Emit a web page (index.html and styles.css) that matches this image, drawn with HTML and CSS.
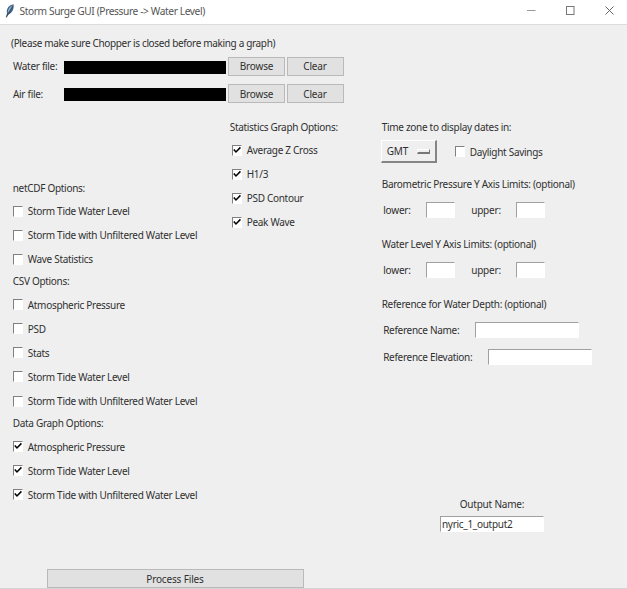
FILE: index.html
```html
<!DOCTYPE html>
<html lang="en">
<head>
<meta charset="utf-8">
<title>Storm Surge GUI (Pressure -&gt; Water Level)</title>
<link rel="stylesheet" href="styles.css">
</head>
<body>
<div class="window">
  <header class="titlebar">
    <svg class="feather" width="10" height="14" viewBox="0 0 10 14"><path d="M1 13 2 9C1 5 4 1 8.500 .3 9.300 4 7.500 9 3.500 10.500L1.500 13.500Z" fill="#3f5f80"/><path d="M2.800 9C2.500 5.500 5 2.500 7.500 1.300 7 4 5 7 2.800 9Z" fill="#8fb2d6"/><path d="M1.200 13.500 7.500 2" stroke="#2c3d50" stroke-width=".6"/></svg>
    <h1 class="title">Storm Surge GUI (Pressure -&gt; Water Level)</h1>
    <svg class="controls" width="90" height="12" viewBox="0 0 90 12" fill="none"><path d="M0 5.500H8.500" stroke="#999"/><rect x="39.500" y="1.500" width="7.500" height="8" stroke="#777"/><path d="M78.500 1.500 86.500 9.500M86.500 1.500 78.500 9.500" stroke="#666"/></svg>
  </header>
  <main class="content">
    <p class="note">(Please make sure Chopper is closed before making a graph)</p>
    <div class="file-row"><span class="file-label">Water file:</span><span class="path"></span><button>Browse</button><button>Clear</button></div>
    <div class="file-row"><span class="file-label">Air file:</span><span class="path"></span><button>Browse</button><button>Clear</button></div>
    <div class="columns">
      <section class="outputs">
        <h2>netCDF Options:</h2>
        <label class="check"><i class="box"></i>Storm Tide Water Level</label>
        <label class="check"><i class="box"></i>Storm Tide with Unfiltered Water Level</label>
        <label class="check"><i class="box"></i>Wave Statistics</label>
        <h2>CSV Options:</h2>
        <label class="check"><i class="box"></i>Atmospheric Pressure</label>
        <label class="check"><i class="box"></i>PSD</label>
        <label class="check"><i class="box"></i>Stats</label>
        <label class="check"><i class="box"></i>Storm Tide Water Level</label>
        <label class="check"><i class="box"></i>Storm Tide with Unfiltered Water Level</label>
        <h2>Data Graph Options:</h2>
        <label class="check"><i class="box"><svg viewBox="0 0 7 7"><path d="M.7 3 2.600 5.200 6.500 1.200"/></svg></i>Atmospheric Pressure</label>
        <label class="check"><i class="box"><svg viewBox="0 0 7 7"><path d="M.7 3 2.600 5.200 6.500 1.200"/></svg></i>Storm Tide Water Level</label>
        <label class="check"><i class="box"><svg viewBox="0 0 7 7"><path d="M.7 3 2.600 5.200 6.500 1.200"/></svg></i>Storm Tide with Unfiltered Water Level</label>
      </section>
      <section class="stats">
        <h2>Statistics Graph Options:</h2>
        <label class="check"><i class="box"><svg viewBox="0 0 7 7"><path d="M.7 3 2.600 5.200 6.500 1.200"/></svg></i>Average Z Cross</label>
        <label class="check"><i class="box"><svg viewBox="0 0 7 7"><path d="M.7 3 2.600 5.200 6.500 1.200"/></svg></i>H1/3</label>
        <label class="check"><i class="box"><svg viewBox="0 0 7 7"><path d="M.7 3 2.600 5.200 6.500 1.200"/></svg></i>PSD Contour</label>
        <label class="check"><i class="box"><svg viewBox="0 0 7 7"><path d="M.7 3 2.600 5.200 6.500 1.200"/></svg></i>Peak Wave</label>
      </section>
      <section class="settings">
        <h2>Time zone to display dates in:</h2>
        <div class="zone-row"><div class="menu">GMT<i class="indicator"></i></div><label class="check"><i class="box"></i>Daylight Savings</label></div>
        <h2>Barometric Pressure Y Axis Limits: (optional)</h2>
        <div class="limits"><span class="limit-label">lower:</span><i class="entry small"></i><span class="limit-label upper">upper:</span><i class="entry small"></i></div>
        <h2>Water Level Y Axis Limits: (optional)</h2>
        <div class="limits"><span class="limit-label">lower:</span><i class="entry small"></i><span class="limit-label upper">upper:</span><i class="entry small"></i></div>
        <h2>Reference for Water Depth: (optional)</h2>
        <div class="reference"><span class="name-label">Reference Name:</span><i class="entry"></i></div>
        <div class="reference"><span class="elevation-label">Reference Elevation:</span><i class="entry"></i></div>
        <div class="output"><span>Output Name:</span><div class="entry">nyric_1_output2</div></div>
      </section>
    </div>
    <button class="process">Process Files</button>
  </main>
</div>
</body>
</html>
```

FILE: styles.css
```css
* { box-sizing: border-box; }
body { margin: 0; overflow: hidden; }
.window {
  width: 627px; height: 589px; display: flex; flex-direction: column;
  background: #efefef; border-bottom: 1px solid #d4d4d4;
  font: 10px/14px "Noto Sans", sans-serif; letter-spacing: -.3px; color: #303030;
  white-space: nowrap;
}
.titlebar {
  height: 25px; flex: none; display: flex; align-items: center;
  padding: 0 11px 2px 5px; background: #fff; border-bottom: 1px solid #dcdcdc;
}
.title { margin: 0 auto 0 4.500px; font-size: 10.200px; font-weight: 400; letter-spacing: -.39px; color: #555; }
.controls { flex: none; margin-right: -1px; }
.content { flex: 1; display: flex; flex-direction: column; padding-top: 11px; }
.note { margin: 0 0 5px 11px; height: 14px; letter-spacing: -.34px; }
.file-row { display: flex; align-items: center; height: 22px; margin-bottom: 5.500px; padding-left: 13px; }
.file-label { width: 50.500px; }
.path { width: 162.500px; height: 13px; margin: 2px 2px 0 0; background: #000; }
button {
  width: 57px; height: 19px; margin: 0 1.500px 0 0; padding: 0;
  font: inherit; letter-spacing: -.15px; color: inherit;
  background: #e1e1e1; border: 1px solid #b9b9b9;
}
.columns { display: grid; grid-template-columns: 217px 152px 1fr; flex: none; height: 459px; padding: 6.600px 0 0 12.700px; }
h2 { margin: 0; font: inherit; height: 21.400px; line-height: 21.400px; }
.check { display: flex; align-items: center; height: 24.100px; }
.box, .entry {
  background: #fff; border: 1px solid #fff; border-top-color: #a0a0a0; border-left-color: #a0a0a0;
}
.box { width: 10px; height: 11px; margin-right: 5px; border-color: #808080 #fff #fff #808080; display: flex; }
.box svg { width: 8px; height: 8px; fill: none; stroke: #000; stroke-width: 1.350; }
.outputs { padding-top: 61px; }
.stats .check { padding-left: 2px; }
.zone-row { display: flex; align-items: center; height: 28px; margin: 0 0 8.300px -1px; }
.menu {
  width: 56px; height: 23px; margin-right: 18px; padding: 0 5px 0 5px;
  display: flex; align-items: center; justify-content: space-between; letter-spacing: -.1px;
  border: 1px solid #fff; border-right: 2px solid #858585; border-bottom: 2px solid #858585;
}
.indicator { width: 13px; height: 5px; border: 1px solid #fff; border-right-color: #777; border-bottom: 2px solid #777; }
.limits { display: flex; align-items: center; height: 29px; margin-bottom: 9.500px; padding-left: 1.500px; }
.limit-label { width: 43px; letter-spacing: -.2px; }
.limit-label.upper { width: 45px; margin-left: 16px; }
.entry { width: 104px; height: 16px; }
.entry.small { width: 29px; }
.reference { display: flex; align-items: center; height: 27px; padding-left: 1.500px; }
h2 + .reference { margin-top: 1px; }
.name-label { width: 91.500px; }
.elevation-label { width: 105px; }
.output { width: 104px; margin: 127px 0 0 58.300px; display: flex; flex-direction: column; align-items: center; gap: 4.500px; }
.output span { letter-spacing: -.2px; }
.output .entry { padding-left: 1px; }
.process { width: 257px; margin-left: 46.500px; }
```
